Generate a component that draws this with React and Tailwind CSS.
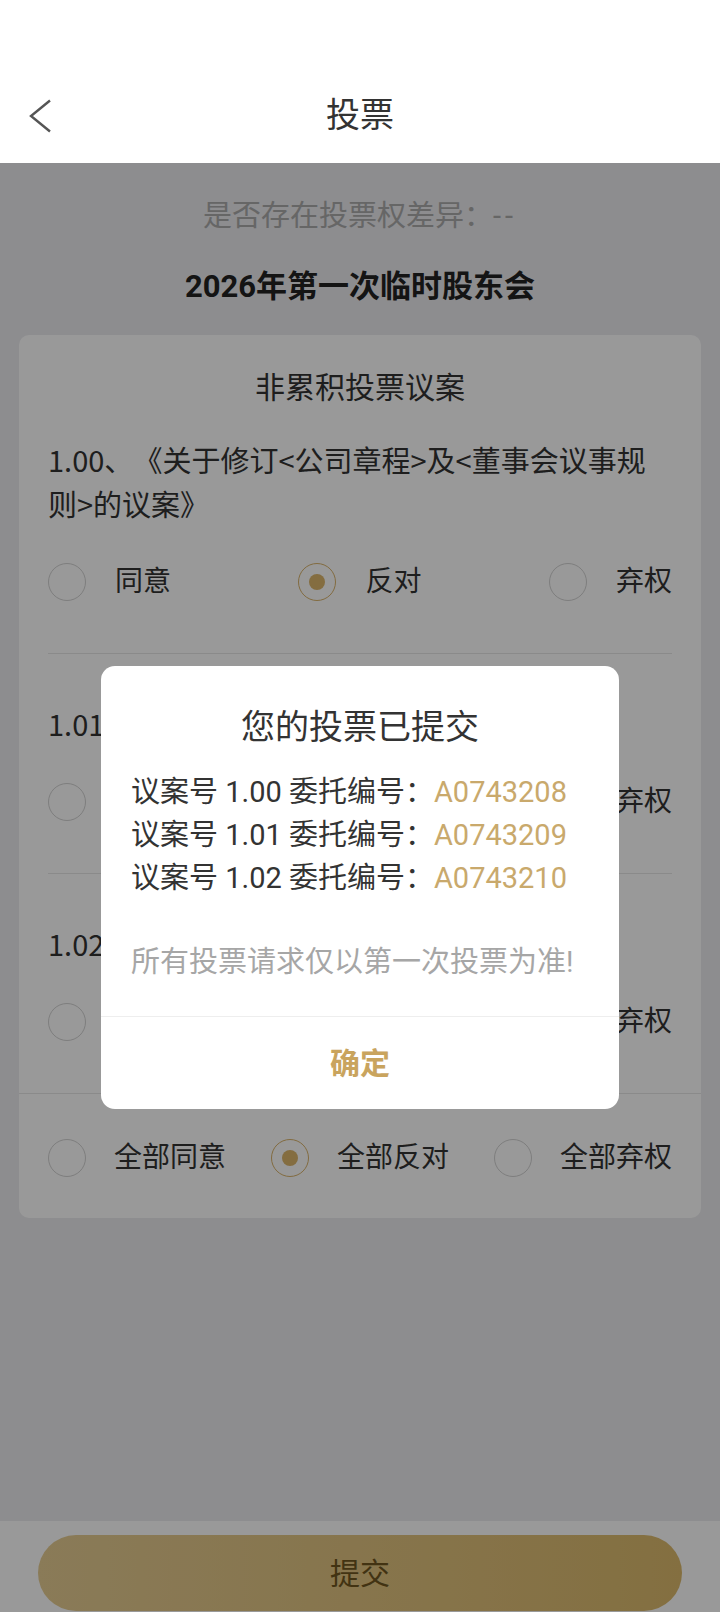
import React from 'react';

const font = { fontFamily: 'Roboto, "Noto Sans CJK SC", sans-serif' };
const cjk = { fontFamily: '"Noto Sans CJK SC", sans-serif' };

const items = [
  { no: '1.00', title: '《关于修订<公司章程>及<董事会议事规则>的议案》' },
  { no: '1.01', title: '《关于选举公司董事的议案》' },
  { no: '1.02', title: '《关于变更会计师事务所的议案》' },
];

const receipts = [
  { no: '1.00', code: 'A0743208' },
  { no: '1.01', code: 'A0743209' },
  { no: '1.02', code: 'A0743210' },
];

function Radio({ checked }) {
  return (
    <span
      className={`flex h-[38px] w-[38px] shrink-0 items-center justify-center rounded-full border-[1.5px] ${
        checked ? 'border-[#d9b36b]' : 'border-[#d2d2d2]'
      }`}
    >
      {checked && <span className="h-[16px] w-[16px] rounded-full bg-[#dcb66c]" />}
    </span>
  );
}

function Option({ label, checked, gap = 'gap-[29px]' }) {
  return (
    <div className={`flex items-center ${gap}`}>
      <Radio checked={checked} />
      <span className="text-[28px] leading-[38px] text-[#333]">{label}</span>
    </div>
  );
}

export default function App() {
  return (
    <div
      className="relative h-[1612px] w-[720px] overflow-hidden bg-[#ebebef] [text-spacing-trim:space-all]"
      style={font}
    >
      {/* header */}
      <div className="relative h-[163px] bg-white">
        <svg className="absolute left-[29px] top-[99px]" width="24" height="34" viewBox="0 0 24 34">
          <polyline points="21,1.5 2,17 21,32.5" fill="none" stroke="#555" strokeWidth="2.4" />
        </svg>
        <div className="absolute inset-x-0 top-[91px] text-center text-[34px] leading-[48px] text-[#333]">投票</div>
      </div>

      {/* page */}
      <div className="flex flex-col items-center pt-[33px]">
        <div className="text-[29px] leading-[40px] text-[#aaa]">
          是否存在投票权差异：<span className="tracking-[4px]">--</span>
        </div>
        <div className="mt-[31px] text-[31px] font-bold leading-[40px] text-[#222]">2026年第一次临时股东会</div>

        <div className="mt-[28px] w-[682px] rounded-[10px] bg-white">
          <div className="pt-[33px] text-center text-[30px] leading-[40px] text-[#333]">非累积投票议案</div>
          {items.map((it, i) => (
            <div
              key={it.no}
              className={`mx-[29px] ${i === 0 ? 'pt-[29px]' : 'pt-[47px]'} pb-[52px] ${
                i < items.length - 1 ? 'border-b border-[#e6e6e6]' : ''
              }`}
            >
              <div className="text-[29px] leading-[44px] text-[#333]" style={cjk}>
                {it.no}、{it.title}
              </div>
              <div className="mt-[38px] flex justify-between">
                <Option label="同意" />
                <Option label="反对" checked />
                <Option label="弃权" />
              </div>
            </div>
          ))}
          <div className="flex justify-between border-t border-[#e6e6e6] px-[29px] pb-[41px] pt-[45px]">
            <Option label="全部同意" gap="gap-[28px]" />
            <Option label="全部反对" gap="gap-[28px]" checked />
            <Option label="全部弃权" gap="gap-[28px]" />
          </div>
        </div>
      </div>

      {/* bottom bar */}
      <div className="absolute inset-x-0 bottom-0 h-[91px] bg-white px-[38px] pt-[14px]">
        <div className="flex h-[76px] items-center justify-center rounded-full bg-gradient-to-r from-[#e6cd93] to-[#dcba6c] text-[30px] text-[#6e561f]">
          提交
        </div>
      </div>

      {/* mask */}
      <div className="absolute inset-x-0 bottom-0 top-[163px] bg-black/40" />

      {/* dialog */}
      <div className="absolute left-[101px] top-[666px] w-[518px] rounded-[14px] bg-white">
        <div className="pt-[37px] text-center text-[34px] leading-[48px] text-[#333]">您的投票已提交</div>
        <div className="px-[30px] pt-[20px]">
          {receipts.map((r) => (
            <div key={r.no} className="text-[29px] leading-[43px] text-[#333]">
              议案号 {r.no} 委托编号：<span className="text-[#c9a96c]">{r.code}</span>
            </div>
          ))}
          <div className="mt-[41px] text-[29px] leading-[43px] text-[#a6a6a6]">所有投票请求仅以第一次投票为准!</div>
        </div>
        <div className="mt-[32px] flex h-[93px] items-center justify-center border-t border-[#eeeeee] text-[30px] font-bold text-[#c9a45e]">
          确定
        </div>
      </div>
    </div>
  );
}
